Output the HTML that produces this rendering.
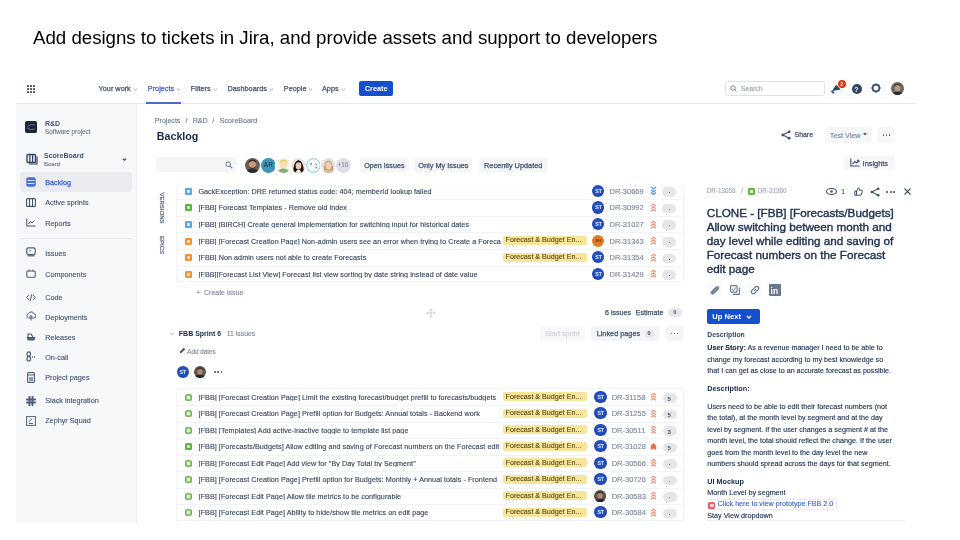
<!DOCTYPE html>
<html><head><meta charset="utf-8"><style>
html,body{margin:0;padding:0;background:#fff;}
body{width:960px;height:540px;overflow:hidden;position:relative;font-family:"Liberation Sans",sans-serif;}
.t{position:absolute;white-space:nowrap;}
.r{position:absolute;}
#j{position:absolute;left:0;top:0;width:960px;height:540px;filter:blur(0.42px);}
</style></head><body>
<div class="t" style="left:33.00px;top:28.84px;font-size:18.67px;line-height:18.67px;color:#000;font-weight:400;filter:blur(0.25px);">Add designs to tickets in Jira, and provide assets and support to developers</div>
<div id="j">
<div class="r" style="left:16px;top:103px;width:900px;height:1px;background:#e6e8ec;"></div>
<div class="r" style="left:16px;top:104px;width:120px;height:419px;background:#f7f8fa;"></div>
<div class="r" style="left:136px;top:104px;width:1px;height:419px;background:#eceef1;"></div>
<svg class="r" style="left:27px;top:84.5px;" width="8" height="8" viewBox="0 0 8 8"><rect x="0" y="0" width="2" height="2" rx="0.6" fill="#42526e"/><rect x="0" y="3" width="2" height="2" rx="0.6" fill="#42526e"/><rect x="0" y="6" width="2" height="2" rx="0.6" fill="#42526e"/><rect x="3" y="0" width="2" height="2" rx="0.6" fill="#42526e"/><rect x="3" y="3" width="2" height="2" rx="0.6" fill="#42526e"/><rect x="3" y="6" width="2" height="2" rx="0.6" fill="#42526e"/><rect x="6" y="0" width="2" height="2" rx="0.6" fill="#42526e"/><rect x="6" y="3" width="2" height="2" rx="0.6" fill="#42526e"/><rect x="6" y="6" width="2" height="2" rx="0.6" fill="#42526e"/></svg>
<div class="t" style="left:98.60px;top:84.82px;font-size:7.3px;line-height:7.3px;color:#42526e;font-weight:400;-webkit-text-stroke:0.25px currentColor;">Your work</div>
<svg class="r" style="left:132.5px;top:87.6px;" width="5" height="3" viewBox="0 0 5 3"><path d="M0.8 0.6 L2.5 2.2 L4.2 0.6" stroke="#8993a4" stroke-width="0.8" fill="none"/></svg>
<div class="t" style="left:147.80px;top:84.82px;font-size:7.3px;line-height:7.3px;color:#3a5fc8;font-weight:400;-webkit-text-stroke:0.25px currentColor;">Projects</div>
<svg class="r" style="left:175.8px;top:87.6px;" width="5" height="3" viewBox="0 0 5 3"><path d="M0.8 0.6 L2.5 2.2 L4.2 0.6" stroke="#8993a4" stroke-width="0.8" fill="none"/></svg>
<div class="r" style="left:146px;top:101.5px;width:35px;height:2px;background:#4c6bc9;"></div>
<div class="t" style="left:190.80px;top:84.82px;font-size:7.3px;line-height:7.3px;color:#42526e;font-weight:400;-webkit-text-stroke:0.25px currentColor;">Filters</div>
<svg class="r" style="left:212.5px;top:87.6px;" width="5" height="3" viewBox="0 0 5 3"><path d="M0.8 0.6 L2.5 2.2 L4.2 0.6" stroke="#8993a4" stroke-width="0.8" fill="none"/></svg>
<div class="t" style="left:227.50px;top:84.82px;font-size:7.3px;line-height:7.3px;color:#42526e;font-weight:400;-webkit-text-stroke:0.25px currentColor;">Dashboards</div>
<svg class="r" style="left:269.2px;top:87.6px;" width="5" height="3" viewBox="0 0 5 3"><path d="M0.8 0.6 L2.5 2.2 L4.2 0.6" stroke="#8993a4" stroke-width="0.8" fill="none"/></svg>
<div class="t" style="left:283.80px;top:84.82px;font-size:7.3px;line-height:7.3px;color:#42526e;font-weight:400;-webkit-text-stroke:0.25px currentColor;">People</div>
<svg class="r" style="left:307.6px;top:87.6px;" width="5" height="3" viewBox="0 0 5 3"><path d="M0.8 0.6 L2.5 2.2 L4.2 0.6" stroke="#8993a4" stroke-width="0.8" fill="none"/></svg>
<div class="t" style="left:322.00px;top:84.82px;font-size:7.3px;line-height:7.3px;color:#42526e;font-weight:400;-webkit-text-stroke:0.25px currentColor;">Apps</div>
<svg class="r" style="left:340.6px;top:87.6px;" width="5" height="3" viewBox="0 0 5 3"><path d="M0.8 0.6 L2.5 2.2 L4.2 0.6" stroke="#8993a4" stroke-width="0.8" fill="none"/></svg>
<div class="r" style="left:359px;top:81px;width:34px;height:15px;background:#1450cc;border-radius:2px"></div>
<div class="t" style="left:364.80px;top:85.02px;font-size:7.3px;line-height:7.3px;color:#fff;font-weight:700;">Create</div>
<div class="r" style="left:725px;top:81px;width:100px;height:15px;background:#fff;border:1px solid #dfe1e6;border-radius:3px;box-sizing:border-box"></div>
<svg class="r" style="left:730px;top:85px;" width="7" height="7" viewBox="0 0 7 7"><circle cx="3" cy="3" r="2.2" stroke="#6b778c" stroke-width="0.9" fill="none"/><path d="M4.6 4.6 L6.5 6.5" stroke="#6b778c" stroke-width="0.9"/></svg>
<div class="t" style="left:741.00px;top:85.64px;font-size:6.8px;line-height:6.8px;color:#97a0af;font-weight:400;-webkit-text-stroke:0.12px currentColor;">Search</div>
<svg class="r" style="left:829px;top:80px;" width="16" height="16" viewBox="0 0 16 16"><path d="M3 11 L7 4.8 L11.8 9.6 Z" fill="#2a4563"/><path d="M3.2 10.2 L5.6 12.6 L4.2 14 L1.8 11.6 Z" fill="#2d6474"/></svg>
<div class="r" style="left:838px;top:80px;width:8px;height:8px;background:#de350b;border-radius:50%"></div>
<div class="t" style="left:840.30px;top:82.47px;font-size:5px;line-height:5px;color:#fff;font-weight:700;">2</div>
<div class="r" style="left:851.5px;top:83.5px;width:10px;height:10px;background:#344563;border-radius:50%"></div>
<div class="t" style="left:854.30px;top:85.67px;font-size:7px;line-height:7px;color:#fff;font-weight:700;">?</div>
<svg class="r" style="left:870px;top:82.2px;" width="12" height="12" viewBox="0 0 12 12"><circle cx="6" cy="6" r="3.3" stroke="#344563" stroke-width="1.5" fill="none"/><rect x="5.2" y="1.4" width="1.6" height="1.8" fill="#344563" transform="rotate(0 6 6)"/><rect x="5.2" y="1.4" width="1.6" height="1.8" fill="#344563" transform="rotate(45 6 6)"/><rect x="5.2" y="1.4" width="1.6" height="1.8" fill="#344563" transform="rotate(90 6 6)"/><rect x="5.2" y="1.4" width="1.6" height="1.8" fill="#344563" transform="rotate(135 6 6)"/><rect x="5.2" y="1.4" width="1.6" height="1.8" fill="#344563" transform="rotate(180 6 6)"/><rect x="5.2" y="1.4" width="1.6" height="1.8" fill="#344563" transform="rotate(225 6 6)"/><rect x="5.2" y="1.4" width="1.6" height="1.8" fill="#344563" transform="rotate(270 6 6)"/><rect x="5.2" y="1.4" width="1.6" height="1.8" fill="#344563" transform="rotate(315 6 6)"/></svg>
<svg class="r" style="left:891.0px;top:81.7px;overflow:visible;" width="13" height="13" viewBox="0 0 13 13"><defs><clipPath id="c8975_882"><circle cx="6.5" cy="6.5" r="6.5"/></clipPath></defs><g clip-path="url(#c8975_882)"><rect width="13" height="13" fill="#6f6659"/><ellipse cx="6.5" cy="6" rx="3" ry="3.6" fill="#b79b7f"/><path d="M3.3 5 Q6.5 1 9.7 5 L9.6 3 Q6.5 0 3.4 3Z" fill="#4a3f33"/><path d="M0 13 Q2 9.5 6.5 9.8 Q11 9.5 13 13Z" fill="#232a36"/></g></svg>
<div class="r" style="left:25px;top:121px;width:12px;height:12px;background:#1d2330;border-radius:2px"></div>
<svg class="r" style="left:25px;top:121px;" width="12" height="12" viewBox="0 0 12 12"><path d="M2 6 Q6 2 10 4 M2 7 Q6 10 10 8" stroke="#6d87b8" stroke-width="0.8" fill="none"/></svg>
<div class="t" style="left:45.00px;top:119.67px;font-size:7px;line-height:7px;color:#42526e;font-weight:700;">R&amp;D</div>
<div class="t" style="left:45.00px;top:129.07px;font-size:6.3px;line-height:6.3px;color:#6b778c;font-weight:400;-webkit-text-stroke:0.12px currentColor;">Software project</div>
<svg class="r" style="left:26px;top:153px;" width="12" height="12" viewBox="0 0 12 12"><rect x="1" y="1.5" width="8.5" height="8" rx="1" stroke="#344563" stroke-width="1.4" fill="none"/><path d="M3.9 1.5 V9.5 M6.6 1.5 V9.5" stroke="#344563" stroke-width="1.3"/><path d="M11 3.5 V11 H3" stroke="#344563" stroke-width="1.2" fill="none"/></svg>
<div class="t" style="left:44.00px;top:151.77px;font-size:7.0px;line-height:7.0px;color:#42526e;font-weight:700;">ScoreBoard</div>
<div class="t" style="left:44.00px;top:161.32px;font-size:6px;line-height:6px;color:#6b778c;font-weight:400;-webkit-text-stroke:0.12px currentColor;">Board</div>
<svg class="r" style="left:122px;top:158px;" width="5" height="3" viewBox="0 0 5 3"><path d="M0.8 0.6 L2.5 2.2 L4.2 0.6" stroke="#42526e" stroke-width="1.3" fill="none"/></svg>
<div class="r" style="left:20px;top:172px;width:112px;height:20px;background:#ebecf0;border-radius:3px"></div>
<svg class="r" style="left:26px;top:177px;" width="10" height="10" viewBox="0 0 10 10"><rect x="0.3" y="0.3" width="9.4" height="9.4" rx="1.8" fill="#4a6fd6"/><path d="M1.5 3.5 H8.5 M1.5 6.5 H8.5" stroke="#dbe4fb" stroke-width="1"/></svg>
<div class="t" style="left:45.20px;top:178.76px;font-size:7.25px;line-height:7.25px;color:#3a5fc8;font-weight:400;-webkit-text-stroke:0.25px currentColor;">Backlog</div>
<svg class="r" style="left:26px;top:198px;" width="10" height="9" viewBox="0 0 10 9"><rect x="0.6" y="0.6" width="8.8" height="7.8" rx="1" stroke="#42526e" stroke-width="1.1" fill="none"/><path d="M3.5 0.6 V8.4 M6.5 0.6 V8.4" stroke="#42526e" stroke-width="1"/></svg>
<div class="t" style="left:45.20px;top:198.82px;font-size:7.3px;line-height:7.3px;color:#44536d;font-weight:400;-webkit-text-stroke:0.12px currentColor;">Active sprints</div>
<svg class="r" style="left:26px;top:218px;" width="10" height="9" viewBox="0 0 10 9"><path d="M0.8 0.5 V8 H9.5" stroke="#42526e" stroke-width="1" fill="none"/><path d="M2.5 6 L4.5 3.5 L6 5 L8.5 2.5" stroke="#42526e" stroke-width="1" fill="none"/></svg>
<div class="t" style="left:45.20px;top:219.62px;font-size:7.3px;line-height:7.3px;color:#44536d;font-weight:400;-webkit-text-stroke:0.12px currentColor;">Reports</div>
<div class="r" style="left:20px;top:237.5px;width:112px;height:1px;background:#e4e6ea;"></div>
<div class="t" style="left:45.20px;top:249.56px;font-size:7.25px;line-height:7.25px;color:#44536d;font-weight:400;-webkit-text-stroke:0.12px currentColor;">Issues</div>
<div class="t" style="left:45.20px;top:270.96px;font-size:7.25px;line-height:7.25px;color:#44536d;font-weight:400;-webkit-text-stroke:0.12px currentColor;">Components</div>
<div class="t" style="left:45.20px;top:293.96px;font-size:7.25px;line-height:7.25px;color:#44536d;font-weight:400;-webkit-text-stroke:0.12px currentColor;">Code</div>
<div class="t" style="left:45.20px;top:313.96px;font-size:7.25px;line-height:7.25px;color:#44536d;font-weight:400;-webkit-text-stroke:0.12px currentColor;">Deployments</div>
<div class="t" style="left:45.20px;top:333.96px;font-size:7.25px;line-height:7.25px;color:#44536d;font-weight:400;-webkit-text-stroke:0.12px currentColor;">Releases</div>
<div class="t" style="left:45.20px;top:353.96px;font-size:7.25px;line-height:7.25px;color:#44536d;font-weight:400;-webkit-text-stroke:0.12px currentColor;">On-call</div>
<div class="t" style="left:45.20px;top:373.96px;font-size:7.25px;line-height:7.25px;color:#44536d;font-weight:400;-webkit-text-stroke:0.12px currentColor;">Project pages</div>
<div class="t" style="left:45.20px;top:396.76px;font-size:7.25px;line-height:7.25px;color:#44536d;font-weight:400;-webkit-text-stroke:0.12px currentColor;">Slack integration</div>
<div class="t" style="left:45.20px;top:416.76px;font-size:7.25px;line-height:7.25px;color:#44536d;font-weight:400;-webkit-text-stroke:0.12px currentColor;">Zephyr Squad</div>
<svg class="r" style="left:26px;top:247px;" width="10" height="10" viewBox="0 0 10 10"><rect x="0.8" y="0.8" width="8.4" height="6.8" rx="1.5" stroke="#505f79" stroke-width="1.2" fill="none"/><path d="M1.5 8.8 H8.5" stroke="#505f79" stroke-width="1.2"/><path d="M3.5 4.5 L5 2.8" stroke="#505f79" stroke-width="0.9"/></svg>
<svg class="r" style="left:26px;top:269px;" width="10" height="9" viewBox="0 0 10 9"><rect x="0.8" y="2" width="8.4" height="6.2" rx="1" stroke="#505f79" stroke-width="1.1" fill="none"/><path d="M3 0.5 V2.5 M7 0.5 V2.5" stroke="#505f79" stroke-width="1"/></svg>
<svg class="r" style="left:26px;top:292.6px;" width="10" height="9" viewBox="0 0 10 9"><path d="M2.8 2 L0.8 4.5 L2.8 7 M7.2 2 L9.2 4.5 L7.2 7 M6 0.8 L4 8.2" stroke="#505f79" stroke-width="1" fill="none"/></svg>
<svg class="r" style="left:26px;top:311px;" width="10" height="10" viewBox="0 0 10 10"><path d="M2.5 7 A2.2 2.2 0 0 1 2.5 2.8 A2.8 2.8 0 0 1 7.8 2.8 A2.1 2.1 0 0 1 7.8 7 Z" stroke="#505f79" stroke-width="1" fill="none"/><path d="M5 9.5 V4.5 M3.6 5.8 L5 4.4 L6.4 5.8" stroke="#505f79" stroke-width="1" fill="none"/></svg>
<svg class="r" style="left:26px;top:332px;" width="10" height="9" viewBox="0 0 10 9"><path d="M0.5 5 H9.5 L8.3 8.5 H1.7 Z" fill="#505f79"/><path d="M2 5 V2 H5 L7 5" stroke="#505f79" stroke-width="1.2" fill="none"/></svg>
<svg class="r" style="left:26px;top:351.3px;" width="10" height="11" viewBox="0 0 10 11"><ellipse cx="2.8" cy="3" rx="1.8" ry="2.2" stroke="#505f79" stroke-width="1.2" fill="none"/><ellipse cx="2.8" cy="7.8" rx="1.8" ry="2.4" stroke="#505f79" stroke-width="1.2" fill="none"/><circle cx="6.5" cy="6" r="0.7" fill="#505f79"/><circle cx="8.6" cy="6" r="0.7" fill="#505f79"/></svg>
<svg class="r" style="left:27px;top:372.2px;" width="8" height="11" viewBox="0 0 8 11"><rect x="0.6" y="0.6" width="6.8" height="9.8" rx="1" stroke="#505f79" stroke-width="1.1" fill="none"/><path d="M0.6 3 H7.4" stroke="#505f79" stroke-width="1"/><rect x="2" y="5" width="4" height="4" fill="#505f79" opacity="0.6"/></svg>
<svg class="r" style="left:26px;top:395.5px;" width="10" height="10" viewBox="0 0 10 10"><path d="M3.5 0.8 V9.2 M6.5 0.8 V9.2 M0.8 3.5 H9.2 M0.8 6.5 H9.2" stroke="#505f79" stroke-width="1.9" stroke-linecap="round"/></svg>
<svg class="r" style="left:26px;top:415.6px;" width="10" height="10" viewBox="0 0 10 10"><rect x="0.6" y="0.6" width="8.8" height="8.8" stroke="#505f79" stroke-width="1" fill="none"/><path d="M2.5 6 L6 2.8 M3 7.5 H7" stroke="#505f79" stroke-width="1" fill="none"/></svg>
<div class="t" style="left:154.80px;top:117.69px;font-size:7.1px;line-height:7.1px;color:#6b778c;font-weight:400;-webkit-text-stroke:0.12px currentColor;">Projects</div>
<div class="t" style="left:185.50px;top:117.69px;font-size:7.1px;line-height:7.1px;color:#6b778c;font-weight:400;-webkit-text-stroke:0.12px currentColor;">/</div>
<div class="t" style="left:192.70px;top:117.69px;font-size:7.1px;line-height:7.1px;color:#6b778c;font-weight:400;-webkit-text-stroke:0.12px currentColor;">R&amp;D</div>
<div class="t" style="left:212.30px;top:117.69px;font-size:7.1px;line-height:7.1px;color:#6b778c;font-weight:400;-webkit-text-stroke:0.12px currentColor;">/</div>
<div class="t" style="left:219.80px;top:117.69px;font-size:7.1px;line-height:7.1px;color:#6b778c;font-weight:400;-webkit-text-stroke:0.12px currentColor;">ScoreBoard</div>
<div class="t" style="left:156.80px;top:131.14px;font-size:10.7px;line-height:10.7px;color:#172b4d;font-weight:700;">Backlog</div>
<svg class="r" style="left:781px;top:130px;" width="10" height="10" viewBox="0 0 10 10"><circle cx="8.2" cy="1.8" r="1.4" fill="#42526e"/><circle cx="1.8" cy="5" r="1.4" fill="#42526e"/><circle cx="8.2" cy="8.2" r="1.4" fill="#42526e"/><path d="M8.2 1.8 L1.8 5 L8.2 8.2" stroke="#42526e" stroke-width="1.1" fill="none"/></svg>
<div class="t" style="left:794.50px;top:131.72px;font-size:6.95px;line-height:6.95px;color:#42526e;font-weight:400;-webkit-text-stroke:0.25px currentColor;">Share</div>
<div class="r" style="left:824.7px;top:127.3px;width:47px;height:15.3px;background:#f6f7f8;border-radius:3px"></div>
<div class="t" style="left:829.80px;top:131.50px;font-size:7.2px;line-height:7.2px;color:#7a869a;font-weight:400;-webkit-text-stroke:0.12px currentColor;">Test View</div>
<svg class="r" style="left:863px;top:133px;" width="4" height="3" viewBox="0 0 4 3"><path d="M0 0 H4 L2 2.5Z" fill="#42526e"/></svg>
<div class="r" style="left:878px;top:127.3px;width:17.4px;height:15.3px;background:#f6f7f8;border-radius:3px"></div>
<div class="r" style="left:882.5px;top:134.2px;width:1.6px;height:1.6px;background:#42526e;border-radius:50%"></div>
<div class="r" style="left:885.5px;top:134.2px;width:1.6px;height:1.6px;background:#42526e;border-radius:50%"></div>
<div class="r" style="left:888.5px;top:134.2px;width:1.6px;height:1.6px;background:#42526e;border-radius:50%"></div>
<div class="r" style="left:843.6px;top:155.7px;width:51.8px;height:14.6px;background:#f6f7f8;border-radius:3px"></div>
<svg class="r" style="left:850px;top:158px;" width="10" height="9" viewBox="0 0 10 9"><path d="M0.8 0.5 V8 H9.5" stroke="#42526e" stroke-width="1.1" fill="none"/><path d="M2.5 6 L5 3.5 L6.5 5 L9 2.5" stroke="#42526e" stroke-width="1.1" fill="none"/><path d="M6.8 2.3 H9 V4.5" stroke="#42526e" stroke-width="1" fill="none"/></svg>
<div class="t" style="left:862.60px;top:160.43px;font-size:7.4px;line-height:7.4px;color:#42526e;font-weight:400;-webkit-text-stroke:0.25px currentColor;">Insights</div>
<div class="r" style="left:156px;top:157.2px;width:80.4px;height:14.7px;background:#f4f5f7;border-radius:3px"></div>
<svg class="r" style="left:225px;top:161px;" width="8" height="8" viewBox="0 0 8 8"><circle cx="3.2" cy="3.2" r="2.3" stroke="#6b778c" stroke-width="1" fill="none"/><path d="M4.9 4.9 L7.2 7.2" stroke="#6b778c" stroke-width="1.1"/></svg>
<svg class="r" style="left:245.3px;top:157.5px;overflow:visible;border-radius:50%;box-shadow:0 0 0 1.2px #fff;" width="15" height="15" viewBox="0 0 15 15"><defs><clipPath id="c2528_1650"><circle cx="7.5" cy="7.5" r="7.5"/></clipPath></defs><g clip-path="url(#c2528_1650)"><rect width="15" height="15" fill="#6a5f55"/><ellipse cx="7.5" cy="6.5" rx="3.6" ry="4.2" fill="#c49a7a"/><path d="M3.8 5 Q7.5 0.8 11.2 5 L11 3 Q7.5 -0.5 4 3Z" fill="#3b2e25"/><path d="M4.3 8 Q7.5 12 10.7 8 L10.5 10 Q7.5 12.5 4.5 10Z" fill="#4a3a2e"/><path d="M0 15 Q2 10.5 7.5 11 Q13 10.5 15 15Z" fill="#1e2a38"/></g></svg>
<svg class="r" style="left:260.7px;top:157.5px;overflow:visible;border-radius:50%;box-shadow:0 0 0 1.2px #fff;" width="15" height="15" viewBox="0 0 15 15"><defs><clipPath id="c2682_1650"><circle cx="7.5" cy="7.5" r="7.5"/></clipPath></defs><g clip-path="url(#c2682_1650)"><rect width="15" height="15" fill="#3f95b5"/></g></svg>
<svg class="r" style="left:275.5px;top:157.5px;overflow:visible;border-radius:50%;box-shadow:0 0 0 1.2px #fff;" width="15" height="15" viewBox="0 0 15 15"><defs><clipPath id="c2830_1650"><circle cx="7.5" cy="7.5" r="7.5"/></clipPath></defs><g clip-path="url(#c2830_1650)"><rect width="15" height="15" fill="#f5f3e6"/><ellipse cx="7.5" cy="6.8" rx="3.6" ry="3.8" fill="#f6dfb8"/><path d="M3.5 6 Q3.5 1.2 7.5 1.5 Q11.5 1.2 11.5 6 Q10 3.5 7.5 3.8 Q5 3.5 3.5 6Z" fill="#eed36a"/><path d="M1 15 Q2.5 10.5 7.5 10.5 Q12.5 10.5 14 15Z" fill="#7fb07a"/></g></svg>
<svg class="r" style="left:290.9px;top:157.5px;overflow:visible;border-radius:50%;box-shadow:0 0 0 1.2px #fff;" width="15" height="15" viewBox="0 0 15 15"><defs><clipPath id="c2984_1650"><circle cx="7.5" cy="7.5" r="7.5"/></clipPath></defs><g clip-path="url(#c2984_1650)"><rect width="15" height="15" fill="#e9e4df"/><path d="M2.5 15 Q1.5 4 7.5 2 Q13.5 4 12.5 15Z" fill="#161412"/><ellipse cx="7.5" cy="7.8" rx="2.9" ry="3.6" fill="#e8c8b0"/><path d="M4.5 15 Q5 12 7.5 11.8 Q10 12 10.5 15Z" fill="#f2efe9"/></g></svg>
<svg class="r" style="left:306.2px;top:157.5px;overflow:visible;border-radius:50%;box-shadow:0 0 0 1.2px #fff;" width="15" height="15" viewBox="0 0 15 15"><defs><clipPath id="c3137_1650"><circle cx="7.5" cy="7.5" r="7.5"/></clipPath></defs><g clip-path="url(#c3137_1650)"><rect width="15" height="15" fill="#f7fcfc"/><circle cx="7.5" cy="7.5" r="6.9" fill="none" stroke="#6cc0c0" stroke-width="1"/><path d="M4.2 6.2 L6 5.6 M9.4 5.8 L10.8 7.2 M10 8.8 L10.4 10.4" stroke="#334" stroke-width="0.9"/></g></svg>
<svg class="r" style="left:320.8px;top:157.5px;overflow:visible;border-radius:50%;box-shadow:0 0 0 1.2px #fff;" width="15" height="15" viewBox="0 0 15 15"><defs><clipPath id="c3283_1650"><circle cx="7.5" cy="7.5" r="7.5"/></clipPath></defs><g clip-path="url(#c3283_1650)"><rect width="15" height="15" fill="#e6e1da"/><path d="M3 13 Q2.5 3 7.5 2.5 Q12.5 3 12 13Z" fill="#c9a074"/><ellipse cx="7.5" cy="7.6" rx="3" ry="3.7" fill="#efcfb6"/><path d="M1.5 15 Q3 11.5 7.5 11.5 Q12 11.5 13.5 15Z" fill="#d9b89a"/></g></svg>
<svg class="r" style="left:336.2px;top:157.5px;overflow:visible;border-radius:50%;box-shadow:0 0 0 1.2px #fff;" width="15" height="15" viewBox="0 0 15 15"><defs><clipPath id="c3437_1650"><circle cx="7.5" cy="7.5" r="7.5"/></clipPath></defs><g clip-path="url(#c3437_1650)"><rect width="15" height="15" fill="#dfe1e6"/></g></svg>
<div class="t" style="left:263.50px;top:162.20px;font-size:6.5px;line-height:6.5px;color:#1d4f6a;font-weight:700;">AR</div>
<div class="t" style="left:337.60px;top:162.37px;font-size:6.3px;line-height:6.3px;color:#8993a4;font-weight:400;-webkit-text-stroke:0.12px currentColor;">+16</div>
<div class="r" style="left:359.8px;top:157.7px;width:49.7px;height:14.8px;background:#f4f5f7;border-radius:3px"></div>
<div class="r" style="left:413.9px;top:157.7px;width:58.6px;height:14.8px;background:#f4f5f7;border-radius:3px"></div>
<div class="r" style="left:478.7px;top:157.7px;width:68.3px;height:14.8px;background:#f4f5f7;border-radius:3px"></div>
<div class="t" style="left:364.20px;top:161.90px;font-size:7.2px;line-height:7.2px;color:#42526e;font-weight:400;-webkit-text-stroke:0.25px currentColor;">Open Issues</div>
<div class="t" style="left:418.30px;top:161.78px;font-size:7.35px;line-height:7.35px;color:#42526e;font-weight:400;-webkit-text-stroke:0.25px currentColor;">Only My Issues</div>
<div class="t" style="left:484.00px;top:161.78px;font-size:7.35px;line-height:7.35px;color:#42526e;font-weight:400;-webkit-text-stroke:0.25px currentColor;">Recently Updated</div>
<div class="t" style="left:161.8px;top:207.6px;font-size:6px;line-height:6px;color:#5e6c84;-webkit-text-stroke:0.25px currentColor;transform:translate(-50%,-50%) rotate(90deg);">VERSIONS</div>
<div class="t" style="left:161.8px;top:245.4px;font-size:6px;line-height:6px;color:#5e6c84;-webkit-text-stroke:0.25px currentColor;transform:translate(-50%,-50%) rotate(90deg);">EPICS</div>
<div class="r" style="left:176px;top:184.5px;width:507.5px;height:97.5px;background:#fff;border:1px solid #f3f4f7;border-top-color:#f9fafb;box-sizing:border-box"></div>
<svg class="r" style="left:185.3px;top:187.70000000000002px;" width="7" height="7" viewBox="0 0 7 7"><rect x="0" y="0" width="7" height="7" rx="1.2" fill="#5aa6ea"/><rect x="2.1" y="2.1" width="2.8" height="2.8" rx="0.6" fill="#e3f1fd"/></svg>
<div class="t" style="left:198.4px;top:187.72px;-webkit-text-stroke:0.12px currentColor;font-size:7.2px;line-height:7.3px;letter-spacing:0.05px;color:#36445c;max-width:303px;overflow:hidden">GackException: DRE returned status code: 404; memberId lookup failed</div>
<div class="r" style="left:592.3px;top:184.8px;width:12.2px;height:12.2px;background:radial-gradient(circle at 50% 45%, #2f5fd0 0%, #1f48b8 60%, #183a9a 100%);border-radius:50%"></div>
<div class="t" style="left:595.30px;top:188.80px;font-size:5.2px;line-height:5.2px;color:#dfe6f7;font-weight:700;">ST</div>
<div class="t" style="left:609.50px;top:187.75px;font-size:7.5px;line-height:7.5px;color:#7a869a;font-weight:400;-webkit-text-stroke:0.12px currentColor;">DR-30669</div>
<svg class="r" style="left:650.2px;top:186.4px;" width="7" height="9" viewBox="0 0 7 9"><path d="M1 1 L3.5 2.8 L6 1 M1 4 L3.5 5.8 L6 4 M1 6.6 L3.5 8.4 L6 6.6" stroke="#5b9cf2" stroke-width="1.4" fill="none"/></svg>
<div class="r" style="left:662.3px;top:187.2px;width:14px;height:9.6px;background:#e4e6ea;border-radius:4.8px"></div>
<div class="r" style="left:668.5px;top:192.2px;width:1.8px;height:0.9px;background:#6b778c;"></div>
<div class="r" style="left:177px;top:199.2px;width:506px;height:1px;background:#f2f3f6;"></div>
<svg class="r" style="left:185.3px;top:204.3px;" width="7" height="7" viewBox="0 0 7 7"><rect x="0" y="0" width="7" height="7" rx="1.2" fill="#5fb544"/><rect x="2.1" y="2.1" width="2.8" height="2.8" rx="0.6" fill="#d4f0c2"/></svg>
<div class="t" style="left:198.4px;top:204.32px;-webkit-text-stroke:0.12px currentColor;font-size:7.2px;line-height:7.3px;letter-spacing:0.05px;color:#36445c;max-width:303px;overflow:hidden">[FBB] Forecast Templates - Remove old index</div>
<div class="r" style="left:592.3px;top:201.4px;width:12.2px;height:12.2px;background:radial-gradient(circle at 50% 45%, #2f5fd0 0%, #1f48b8 60%, #183a9a 100%);border-radius:50%"></div>
<div class="t" style="left:595.30px;top:205.40px;font-size:5.2px;line-height:5.2px;color:#dfe6f7;font-weight:700;">ST</div>
<div class="t" style="left:609.50px;top:204.35px;font-size:7.5px;line-height:7.5px;color:#7a869a;font-weight:400;-webkit-text-stroke:0.12px currentColor;">DR-30992</div>
<svg class="r" style="left:650.2px;top:203.0px;" width="7" height="9" viewBox="0 0 7 9"><path d="M1 3 L3.5 1.2 L6 3 M1 5.6 L3.5 3.8 L6 5.6 M1 8.2 L3.5 6.4 L6 8.2" stroke="#f59a80" stroke-width="1.3" fill="none"/></svg>
<div class="r" style="left:662.3px;top:203.79999999999998px;width:14px;height:9.6px;background:#e4e6ea;border-radius:4.8px"></div>
<div class="r" style="left:668.5px;top:208.79999999999998px;width:1.8px;height:0.9px;background:#6b778c;"></div>
<div class="r" style="left:177px;top:215.8px;width:506px;height:1px;background:#f2f3f6;"></div>
<svg class="r" style="left:185.3px;top:220.90000000000003px;" width="7" height="7" viewBox="0 0 7 7"><rect x="0" y="0" width="7" height="7" rx="1.2" fill="#5aa6ea"/><rect x="2.1" y="2.1" width="2.8" height="2.8" rx="0.6" fill="#e3f1fd"/></svg>
<div class="t" style="left:198.4px;top:220.92px;-webkit-text-stroke:0.12px currentColor;font-size:7.2px;line-height:7.3px;letter-spacing:0.05px;color:#36445c;max-width:303px;overflow:hidden">[FBB] [BIRCH] Create general implementation for switching input for historical dates</div>
<div class="r" style="left:592.3px;top:218.00000000000003px;width:12.2px;height:12.2px;background:radial-gradient(circle at 50% 45%, #2f5fd0 0%, #1f48b8 60%, #183a9a 100%);border-radius:50%"></div>
<div class="t" style="left:595.30px;top:222.00px;font-size:5.2px;line-height:5.2px;color:#dfe6f7;font-weight:700;">ST</div>
<div class="t" style="left:609.50px;top:220.95px;font-size:7.5px;line-height:7.5px;color:#7a869a;font-weight:400;-webkit-text-stroke:0.12px currentColor;">DR-31027</div>
<svg class="r" style="left:650.2px;top:219.60000000000002px;" width="7" height="9" viewBox="0 0 7 9"><path d="M1 3 L3.5 1.2 L6 3 M1 5.6 L3.5 3.8 L6 5.6 M1 8.2 L3.5 6.4 L6 8.2" stroke="#f59a80" stroke-width="1.3" fill="none"/></svg>
<div class="r" style="left:662.3px;top:220.4px;width:14px;height:9.6px;background:#e4e6ea;border-radius:4.8px"></div>
<div class="r" style="left:668.5px;top:225.4px;width:1.8px;height:0.9px;background:#6b778c;"></div>
<div class="r" style="left:177px;top:232.4px;width:506px;height:1px;background:#f2f3f6;"></div>
<svg class="r" style="left:185.3px;top:237.50000000000003px;" width="7" height="7" viewBox="0 0 7 7"><rect x="0" y="0" width="7" height="7" rx="1.2" fill="#f79232"/><rect x="2.1" y="2.1" width="2.8" height="2.8" rx="0.6" fill="#fde0c2"/></svg>
<div class="t" style="left:198.4px;top:237.52px;-webkit-text-stroke:0.12px currentColor;font-size:7.2px;line-height:7.3px;letter-spacing:0.05px;color:#36445c;max-width:303px;overflow:hidden">[FBB] [Forecast Creation Page] Non-admin users see an error when trying to Create a Foreca</div>
<div class="r" style="left:502.6px;top:236.20000000000002px;width:84px;height:9px;background:#f8e59c;border-radius:2px"></div>
<div class="t" style="left:505.60px;top:237.45px;font-size:7.15px;line-height:7.15px;color:#5a4a14;font-weight:400;-webkit-text-stroke:0.12px currentColor;">Forecast &amp; Budget En...</div>
<div class="r" style="left:592.3px;top:234.60000000000002px;width:12.2px;height:12.2px;background:#e07b23;border-radius:50%"></div>
<div class="t" style="left:595.50px;top:239.06px;font-size:4.3px;line-height:4.3px;color:#7a3a00;font-weight:700;">EH</div>
<div class="t" style="left:609.50px;top:237.55px;font-size:7.5px;line-height:7.5px;color:#7a869a;font-weight:400;-webkit-text-stroke:0.12px currentColor;">DR-31343</div>
<svg class="r" style="left:650.2px;top:236.20000000000002px;" width="7" height="9" viewBox="0 0 7 9"><path d="M1 3 L3.5 1.2 L6 3 M1 5.6 L3.5 3.8 L6 5.6 M1 8.2 L3.5 6.4 L6 8.2" stroke="#f59a80" stroke-width="1.3" fill="none"/></svg>
<div class="r" style="left:662.3px;top:237.0px;width:14px;height:9.6px;background:#e4e6ea;border-radius:4.8px"></div>
<div class="r" style="left:668.5px;top:242.0px;width:1.8px;height:0.9px;background:#6b778c;"></div>
<div class="r" style="left:177px;top:249.0px;width:506px;height:1px;background:#f2f3f6;"></div>
<svg class="r" style="left:185.3px;top:254.10000000000002px;" width="7" height="7" viewBox="0 0 7 7"><rect x="0" y="0" width="7" height="7" rx="1.2" fill="#f79232"/><rect x="2.1" y="2.1" width="2.8" height="2.8" rx="0.6" fill="#fde0c2"/></svg>
<div class="t" style="left:198.4px;top:254.12px;-webkit-text-stroke:0.12px currentColor;font-size:7.2px;line-height:7.3px;letter-spacing:0.05px;color:#36445c;max-width:303px;overflow:hidden">[FBB] Non admin users not able to create Forecasts</div>
<div class="r" style="left:502.6px;top:252.8px;width:84px;height:9px;background:#f8e59c;border-radius:2px"></div>
<div class="t" style="left:505.60px;top:254.05px;font-size:7.15px;line-height:7.15px;color:#5a4a14;font-weight:400;-webkit-text-stroke:0.12px currentColor;">Forecast &amp; Budget En...</div>
<div class="r" style="left:592.3px;top:251.20000000000002px;width:12.2px;height:12.2px;background:radial-gradient(circle at 50% 45%, #2f5fd0 0%, #1f48b8 60%, #183a9a 100%);border-radius:50%"></div>
<div class="t" style="left:595.30px;top:255.20px;font-size:5.2px;line-height:5.2px;color:#dfe6f7;font-weight:700;">ST</div>
<div class="t" style="left:609.50px;top:254.15px;font-size:7.5px;line-height:7.5px;color:#7a869a;font-weight:400;-webkit-text-stroke:0.12px currentColor;">DR-31354</div>
<svg class="r" style="left:650.2px;top:252.8px;" width="7" height="9" viewBox="0 0 7 9"><path d="M1 3 L3.5 1.2 L6 3 M1 5.6 L3.5 3.8 L6 5.6 M1 8.2 L3.5 6.4 L6 8.2" stroke="#f59a80" stroke-width="1.3" fill="none"/></svg>
<div class="r" style="left:662.3px;top:253.60000000000002px;width:14px;height:9.6px;background:#e4e6ea;border-radius:4.8px"></div>
<div class="r" style="left:668.5px;top:258.6px;width:1.8px;height:0.9px;background:#6b778c;"></div>
<div class="r" style="left:177px;top:265.6px;width:506px;height:1px;background:#f2f3f6;"></div>
<svg class="r" style="left:185.3px;top:270.7px;" width="7" height="7" viewBox="0 0 7 7"><rect x="0" y="0" width="7" height="7" rx="1.2" fill="#f79232"/><rect x="2.1" y="2.1" width="2.8" height="2.8" rx="0.6" fill="#fde0c2"/></svg>
<div class="t" style="left:198.4px;top:270.72px;-webkit-text-stroke:0.12px currentColor;font-size:7.2px;line-height:7.3px;letter-spacing:0.05px;color:#36445c;max-width:303px;overflow:hidden">[FBB][Forecast List View] Forecast list view sorting by date string instead of date value</div>
<div class="r" style="left:592.3px;top:267.79999999999995px;width:12.2px;height:12.2px;background:radial-gradient(circle at 50% 45%, #2f5fd0 0%, #1f48b8 60%, #183a9a 100%);border-radius:50%"></div>
<div class="t" style="left:595.30px;top:271.80px;font-size:5.2px;line-height:5.2px;color:#dfe6f7;font-weight:700;">ST</div>
<div class="t" style="left:609.50px;top:270.75px;font-size:7.5px;line-height:7.5px;color:#7a869a;font-weight:400;-webkit-text-stroke:0.12px currentColor;">DR-31429</div>
<svg class="r" style="left:650.2px;top:269.4px;" width="7" height="9" viewBox="0 0 7 9"><path d="M1 3 L3.5 1.2 L6 3 M1 5.6 L3.5 3.8 L6 5.6 M1 8.2 L3.5 6.4 L6 8.2" stroke="#f59a80" stroke-width="1.3" fill="none"/></svg>
<div class="r" style="left:662.3px;top:270.2px;width:14px;height:9.6px;background:#e4e6ea;border-radius:4.8px"></div>
<div class="r" style="left:668.5px;top:275.2px;width:1.8px;height:0.9px;background:#6b778c;"></div>
<div class="t" style="left:196.00px;top:289.47px;font-size:7px;line-height:7px;color:#7a869a;font-weight:400;-webkit-text-stroke:0.12px currentColor;">+</div>
<div class="t" style="left:204.00px;top:289.47px;font-size:7px;line-height:7px;color:#7a869a;font-weight:400;-webkit-text-stroke:0.12px currentColor;">Create issue</div>
<svg class="r" style="left:425.5px;top:308px;" width="10" height="10" viewBox="0 0 10 10"><path d="M5 0.8 V9.2 M0.8 5 H9.2" stroke="#c8cdd5" stroke-width="1"/><path d="M3.5 2.2 L5 0.8 L6.5 2.2 M3.5 7.8 L5 9.2 L6.5 7.8 M2.2 3.5 L0.8 5 L2.2 6.5 M7.8 3.5 L9.2 5 L7.8 6.5" stroke="#c8cdd5" stroke-width="0.9" fill="none"/></svg>
<div class="t" style="left:605.00px;top:309.79px;font-size:7.1px;line-height:7.1px;color:#42526e;font-weight:400;-webkit-text-stroke:0.25px currentColor;">6 issues</div>
<div class="t" style="left:635.80px;top:309.79px;font-size:7.1px;line-height:7.1px;color:#42526e;font-weight:400;-webkit-text-stroke:0.25px currentColor;">Estimate</div>
<div class="r" style="left:668.3px;top:308.3px;width:13.4px;height:8.4px;background:#e6e8ec;border-radius:4.2px"></div>
<div class="t" style="left:673.30px;top:310.16px;font-size:5.6px;line-height:5.6px;color:#42526e;font-weight:700;">0</div>
<svg class="r" style="left:169.8px;top:332.2px;" width="4" height="3" viewBox="0 0 4 3"><path d="M0.3 1.2 L2 2.4 L3.7 1.2" stroke="#97a0af" stroke-width="0.9" fill="none"/></svg>
<div class="t" style="left:178.80px;top:330.07px;font-size:7px;line-height:7px;color:#172b4d;font-weight:700;">FBB Sprint 6</div>
<div class="t" style="left:226.70px;top:331.16px;font-size:6.9px;line-height:6.9px;color:#7a869a;font-weight:400;-webkit-text-stroke:0.12px currentColor;">11 issues</div>
<div class="r" style="left:540px;top:325.8px;width:45px;height:15px;background:#f7f8f9;border-radius:3px"></div>
<div class="t" style="left:545.00px;top:330.10px;font-size:7.2px;line-height:7.2px;color:#d4d8de;font-weight:400;-webkit-text-stroke:0.25px currentColor;">Start sprint</div>
<div class="r" style="left:590.8px;top:325.8px;width:68.4px;height:15px;background:#f4f5f7;border-radius:3px"></div>
<div class="t" style="left:596.70px;top:330.02px;font-size:7.3px;line-height:7.3px;color:#42526e;font-weight:400;-webkit-text-stroke:0.25px currentColor;">Linked pages</div>
<div class="r" style="left:644.5px;top:329.5px;width:9px;height:8px;background:#e6e8ec;border-radius:4px"></div>
<div class="t" style="left:647.40px;top:331.26px;font-size:5.6px;line-height:5.6px;color:#42526e;font-weight:700;">0</div>
<div class="r" style="left:665.8px;top:325.8px;width:17.5px;height:15px;background:#f4f5f7;border-radius:3px"></div>
<div class="r" style="left:670.5px;top:332.5px;width:1.6px;height:1.6px;background:#42526e;border-radius:50%"></div>
<div class="r" style="left:673.5px;top:332.5px;width:1.6px;height:1.6px;background:#42526e;border-radius:50%"></div>
<div class="r" style="left:676.5px;top:332.5px;width:1.6px;height:1.6px;background:#42526e;border-radius:50%"></div>
<svg class="r" style="left:178.5px;top:347px;" width="7" height="7" viewBox="0 0 7 7"><path d="M0.8 6.2 L1.3 4.3 L4.8 0.8 L6.2 2.2 L2.7 5.7 Z" fill="#42526e"/></svg>
<div class="t" style="left:187.20px;top:349.07px;font-size:6.3px;line-height:6.3px;color:#7a869a;font-weight:400;-webkit-text-stroke:0.12px currentColor;">Add dates</div>
<div class="r" style="left:176.6px;top:366.09999999999997px;width:12.2px;height:12.2px;background:radial-gradient(circle at 50% 45%, #2f5fd0 0%, #1f48b8 60%, #183a9a 100%);border-radius:50%"></div>
<div class="t" style="left:179.60px;top:370.10px;font-size:5.2px;line-height:5.2px;color:#dfe6f7;font-weight:700;">ST</div>
<svg class="r" style="left:193.5px;top:366.2px;overflow:visible;" width="12" height="12" viewBox="0 0 12 12"><defs><clipPath id="c1995_3722"><circle cx="6.0" cy="6.0" r="6.0"/></clipPath></defs><g clip-path="url(#c1995_3722)"><rect width="12" height="12" fill="#5d5348"/><ellipse cx="6" cy="5.4" rx="2.8" ry="3.3" fill="#a88b6e"/><path d="M3 4.5 Q6 1 9 4.5 L9 2.6 Q6 0 3.1 2.6Z" fill="#3a3028"/><path d="M0 12 Q1.5 8.6 6 8.8 Q10.5 8.6 12 12Z" fill="#1f2630"/></g></svg>
<div class="r" style="left:214.2px;top:371.4px;width:1.8px;height:1.8px;background:#42526e;border-radius:50%"></div>
<div class="r" style="left:217.39999999999998px;top:371.4px;width:1.8px;height:1.8px;background:#42526e;border-radius:50%"></div>
<div class="r" style="left:220.6px;top:371.4px;width:1.8px;height:1.8px;background:#42526e;border-radius:50%"></div>
<div class="r" style="left:176px;top:387.5px;width:508px;height:140px;background:#fff;border:1px solid #f3f4f7;box-sizing:border-box"></div>
<svg class="r" style="left:185.3px;top:393.7px;" width="7" height="7" viewBox="0 0 7 7"><rect x="0.85" y="0.85" width="5.3" height="5.3" rx="0.8" fill="#dcf0cf" stroke="#5aa83a" stroke-width="1.4"/></svg>
<div class="t" style="left:198.6px;top:393.72px;-webkit-text-stroke:0.12px currentColor;font-size:7.2px;line-height:7.3px;letter-spacing:0.05px;color:#36445c;max-width:303px;overflow:hidden">[FBB] [Forecast Creation Page] Limit the existing forecast/budget prefill to forecasts/budgets</div>
<div class="r" style="left:502.6px;top:392.4px;width:84px;height:9px;background:#f8e59c;border-radius:2px"></div>
<div class="t" style="left:505.60px;top:393.65px;font-size:7.15px;line-height:7.15px;color:#5a4a14;font-weight:400;-webkit-text-stroke:0.12px currentColor;">Forecast &amp; Budget En...</div>
<div class="r" style="left:594.4px;top:390.79999999999995px;width:12.2px;height:12.2px;background:radial-gradient(circle at 50% 45%, #2f5fd0 0%, #1f48b8 60%, #183a9a 100%);border-radius:50%"></div>
<div class="t" style="left:597.40px;top:394.80px;font-size:5.2px;line-height:5.2px;color:#dfe6f7;font-weight:700;">ST</div>
<div class="t" style="left:611.70px;top:393.75px;font-size:7.5px;line-height:7.5px;color:#7a869a;font-weight:400;-webkit-text-stroke:0.12px currentColor;">DR-31158</div>
<svg class="r" style="left:650.2px;top:392.4px;" width="7" height="9" viewBox="0 0 7 9"><path d="M1 3 L3.5 1.2 L6 3 M1 5.6 L3.5 3.8 L6 5.6 M1 8.2 L3.5 6.4 L6 8.2" stroke="#f59a80" stroke-width="1.3" fill="none"/></svg>
<div class="r" style="left:662.5px;top:393.2px;width:14px;height:9.6px;background:#e4e6ea;border-radius:4.8px"></div>
<div class="t" style="left:667.60px;top:395.52px;font-size:6.0px;line-height:6.0px;color:#42526e;font-weight:700;">5</div>
<div class="r" style="left:177px;top:405.2px;width:506px;height:1px;background:#f2f3f6;"></div>
<svg class="r" style="left:185.3px;top:410.2px;" width="7" height="7" viewBox="0 0 7 7"><rect x="0.85" y="0.85" width="5.3" height="5.3" rx="0.8" fill="#dcf0cf" stroke="#5aa83a" stroke-width="1.4"/></svg>
<div class="t" style="left:198.6px;top:410.22px;-webkit-text-stroke:0.12px currentColor;font-size:7.2px;line-height:7.3px;letter-spacing:0.05px;color:#36445c;max-width:303px;overflow:hidden">[FBB] [Forecast Creation Page] Prefill option for Budgets: Annual totals - Backend work</div>
<div class="r" style="left:502.6px;top:408.9px;width:84px;height:9px;background:#f8e59c;border-radius:2px"></div>
<div class="t" style="left:505.60px;top:410.15px;font-size:7.15px;line-height:7.15px;color:#5a4a14;font-weight:400;-webkit-text-stroke:0.12px currentColor;">Forecast &amp; Budget En...</div>
<div class="r" style="left:594.4px;top:407.29999999999995px;width:12.2px;height:12.2px;background:radial-gradient(circle at 50% 45%, #2f5fd0 0%, #1f48b8 60%, #183a9a 100%);border-radius:50%"></div>
<div class="t" style="left:597.40px;top:411.30px;font-size:5.2px;line-height:5.2px;color:#dfe6f7;font-weight:700;">ST</div>
<div class="t" style="left:611.70px;top:410.25px;font-size:7.5px;line-height:7.5px;color:#7a869a;font-weight:400;-webkit-text-stroke:0.12px currentColor;">DR-31255</div>
<svg class="r" style="left:650.2px;top:408.9px;" width="7" height="9" viewBox="0 0 7 9"><path d="M1 3 L3.5 1.2 L6 3 M1 5.6 L3.5 3.8 L6 5.6 M1 8.2 L3.5 6.4 L6 8.2" stroke="#f59a80" stroke-width="1.3" fill="none"/></svg>
<div class="r" style="left:662.5px;top:409.7px;width:14px;height:9.6px;background:#e4e6ea;border-radius:4.8px"></div>
<div class="t" style="left:667.60px;top:412.02px;font-size:6.0px;line-height:6.0px;color:#42526e;font-weight:700;">5</div>
<div class="r" style="left:177px;top:421.7px;width:506px;height:1px;background:#f2f3f6;"></div>
<svg class="r" style="left:185.3px;top:426.7px;" width="7" height="7" viewBox="0 0 7 7"><rect x="0.85" y="0.85" width="5.3" height="5.3" rx="0.8" fill="#dcf0cf" stroke="#5aa83a" stroke-width="1.4"/></svg>
<div class="t" style="left:198.6px;top:426.72px;-webkit-text-stroke:0.12px currentColor;font-size:7.2px;line-height:7.3px;letter-spacing:0.05px;color:#36445c;max-width:303px;overflow:hidden">[FBB] [Templates] Add active-inactive toggle to template list page</div>
<div class="r" style="left:502.6px;top:425.4px;width:84px;height:9px;background:#f8e59c;border-radius:2px"></div>
<div class="t" style="left:505.60px;top:426.65px;font-size:7.15px;line-height:7.15px;color:#5a4a14;font-weight:400;-webkit-text-stroke:0.12px currentColor;">Forecast &amp; Budget En...</div>
<div class="r" style="left:594.4px;top:423.79999999999995px;width:12.2px;height:12.2px;background:radial-gradient(circle at 50% 45%, #2f5fd0 0%, #1f48b8 60%, #183a9a 100%);border-radius:50%"></div>
<div class="t" style="left:597.40px;top:427.80px;font-size:5.2px;line-height:5.2px;color:#dfe6f7;font-weight:700;">ST</div>
<div class="t" style="left:611.70px;top:426.75px;font-size:7.5px;line-height:7.5px;color:#7a869a;font-weight:400;-webkit-text-stroke:0.12px currentColor;">DR-30511</div>
<svg class="r" style="left:650.2px;top:425.4px;" width="7" height="9" viewBox="0 0 7 9"><path d="M1 3 L3.5 1.2 L6 3 M1 5.6 L3.5 3.8 L6 5.6 M1 8.2 L3.5 6.4 L6 8.2" stroke="#f59a80" stroke-width="1.3" fill="none"/></svg>
<div class="r" style="left:662.5px;top:426.2px;width:14px;height:9.6px;background:#e4e6ea;border-radius:4.8px"></div>
<div class="t" style="left:667.60px;top:428.52px;font-size:6.0px;line-height:6.0px;color:#42526e;font-weight:700;">3</div>
<div class="r" style="left:177px;top:438.2px;width:506px;height:1px;background:#f2f3f6;"></div>
<svg class="r" style="left:185.3px;top:443.2px;" width="7" height="7" viewBox="0 0 7 7"><rect x="0" y="0" width="7" height="7" rx="1.2" fill="#5fb544"/><rect x="2.1" y="2.1" width="2.8" height="2.8" rx="0.6" fill="#d4f0c2"/></svg>
<div class="t" style="left:198.6px;top:443.22px;-webkit-text-stroke:0.12px currentColor;font-size:7.2px;line-height:7.3px;letter-spacing:0.05px;color:#36445c;max-width:303px;overflow:hidden">[FBB] [Forecasts/Budgets] Allow editing and saving of Forecast numbers on the Forecast edit</div>
<div class="r" style="left:502.6px;top:441.9px;width:84px;height:9px;background:#f8e59c;border-radius:2px"></div>
<div class="t" style="left:505.60px;top:443.15px;font-size:7.15px;line-height:7.15px;color:#5a4a14;font-weight:400;-webkit-text-stroke:0.12px currentColor;">Forecast &amp; Budget En...</div>
<div class="r" style="left:594.4px;top:440.29999999999995px;width:12.2px;height:12.2px;background:radial-gradient(circle at 50% 45%, #2f5fd0 0%, #1f48b8 60%, #183a9a 100%);border-radius:50%"></div>
<div class="t" style="left:597.40px;top:444.30px;font-size:5.2px;line-height:5.2px;color:#dfe6f7;font-weight:700;">ST</div>
<div class="t" style="left:611.70px;top:443.25px;font-size:7.5px;line-height:7.5px;color:#7a869a;font-weight:400;-webkit-text-stroke:0.12px currentColor;">DR-31028</div>
<svg class="r" style="left:650.2px;top:441.9px;" width="7" height="9" viewBox="0 0 7 9"><path d="M0.8 3.8 L3.5 1 L6.2 3.8 V8 L3.5 6.5 L0.8 8 Z" fill="#ef6a47"/></svg>
<div class="r" style="left:662.5px;top:442.7px;width:14px;height:9.6px;background:#e4e6ea;border-radius:4.8px"></div>
<div class="t" style="left:667.60px;top:445.02px;font-size:6.0px;line-height:6.0px;color:#42526e;font-weight:700;">5</div>
<div class="r" style="left:177px;top:454.7px;width:506px;height:1px;background:#f2f3f6;"></div>
<svg class="r" style="left:185.3px;top:459.7px;" width="7" height="7" viewBox="0 0 7 7"><rect x="0.85" y="0.85" width="5.3" height="5.3" rx="0.8" fill="#dcf0cf" stroke="#5aa83a" stroke-width="1.4"/></svg>
<div class="t" style="left:198.6px;top:459.72px;-webkit-text-stroke:0.12px currentColor;font-size:7.2px;line-height:7.3px;letter-spacing:0.05px;color:#36445c;max-width:303px;overflow:hidden">[FBB] [Forecast Edit Page] Add view for "By Day Total by Segment"</div>
<div class="r" style="left:502.6px;top:458.4px;width:84px;height:9px;background:#f8e59c;border-radius:2px"></div>
<div class="t" style="left:505.60px;top:459.65px;font-size:7.15px;line-height:7.15px;color:#5a4a14;font-weight:400;-webkit-text-stroke:0.12px currentColor;">Forecast &amp; Budget En...</div>
<div class="r" style="left:594.4px;top:456.79999999999995px;width:12.2px;height:12.2px;background:radial-gradient(circle at 50% 45%, #2f5fd0 0%, #1f48b8 60%, #183a9a 100%);border-radius:50%"></div>
<div class="t" style="left:597.40px;top:460.80px;font-size:5.2px;line-height:5.2px;color:#dfe6f7;font-weight:700;">ST</div>
<div class="t" style="left:611.70px;top:459.75px;font-size:7.5px;line-height:7.5px;color:#7a869a;font-weight:400;-webkit-text-stroke:0.12px currentColor;">DR-30566</div>
<svg class="r" style="left:650.2px;top:458.4px;" width="7" height="9" viewBox="0 0 7 9"><path d="M1 3 L3.5 1.2 L6 3 M1 5.6 L3.5 3.8 L6 5.6 M1 8.2 L3.5 6.4 L6 8.2" stroke="#f59a80" stroke-width="1.3" fill="none"/></svg>
<div class="r" style="left:662.5px;top:459.2px;width:14px;height:9.6px;background:#e4e6ea;border-radius:4.8px"></div>
<div class="r" style="left:668.7px;top:464.2px;width:1.8px;height:0.9px;background:#6b778c;"></div>
<div class="r" style="left:177px;top:471.2px;width:506px;height:1px;background:#f2f3f6;"></div>
<svg class="r" style="left:185.3px;top:476.2px;" width="7" height="7" viewBox="0 0 7 7"><rect x="0.85" y="0.85" width="5.3" height="5.3" rx="0.8" fill="#dcf0cf" stroke="#5aa83a" stroke-width="1.4"/></svg>
<div class="t" style="left:198.6px;top:476.22px;-webkit-text-stroke:0.12px currentColor;font-size:7.2px;line-height:7.3px;letter-spacing:0.05px;color:#36445c;max-width:303px;overflow:hidden">[FBB] [Forecast Creation Page] Prefill option for Budgets: Monthly + Annual totals - Frontend</div>
<div class="r" style="left:502.6px;top:474.9px;width:84px;height:9px;background:#f8e59c;border-radius:2px"></div>
<div class="t" style="left:505.60px;top:476.15px;font-size:7.15px;line-height:7.15px;color:#5a4a14;font-weight:400;-webkit-text-stroke:0.12px currentColor;">Forecast &amp; Budget En...</div>
<div class="r" style="left:594.4px;top:473.29999999999995px;width:12.2px;height:12.2px;background:radial-gradient(circle at 50% 45%, #2f5fd0 0%, #1f48b8 60%, #183a9a 100%);border-radius:50%"></div>
<div class="t" style="left:597.40px;top:477.30px;font-size:5.2px;line-height:5.2px;color:#dfe6f7;font-weight:700;">ST</div>
<div class="t" style="left:611.70px;top:476.25px;font-size:7.5px;line-height:7.5px;color:#7a869a;font-weight:400;-webkit-text-stroke:0.12px currentColor;">DR-30726</div>
<svg class="r" style="left:650.2px;top:474.9px;" width="7" height="9" viewBox="0 0 7 9"><path d="M1 3 L3.5 1.2 L6 3 M1 5.6 L3.5 3.8 L6 5.6 M1 8.2 L3.5 6.4 L6 8.2" stroke="#f59a80" stroke-width="1.3" fill="none"/></svg>
<div class="r" style="left:662.5px;top:475.7px;width:14px;height:9.6px;background:#e4e6ea;border-radius:4.8px"></div>
<div class="r" style="left:668.7px;top:480.7px;width:1.8px;height:0.9px;background:#6b778c;"></div>
<div class="r" style="left:177px;top:487.7px;width:506px;height:1px;background:#f2f3f6;"></div>
<svg class="r" style="left:185.3px;top:492.7px;" width="7" height="7" viewBox="0 0 7 7"><rect x="0.85" y="0.85" width="5.3" height="5.3" rx="0.8" fill="#dcf0cf" stroke="#5aa83a" stroke-width="1.4"/></svg>
<div class="t" style="left:198.6px;top:492.72px;-webkit-text-stroke:0.12px currentColor;font-size:7.2px;line-height:7.3px;letter-spacing:0.05px;color:#36445c;max-width:303px;overflow:hidden">[FBB] [Forecast Edit Page] Allow tile metrics to be configurable</div>
<div class="r" style="left:502.6px;top:491.4px;width:84px;height:9px;background:#f8e59c;border-radius:2px"></div>
<div class="t" style="left:505.60px;top:492.65px;font-size:7.15px;line-height:7.15px;color:#5a4a14;font-weight:400;-webkit-text-stroke:0.12px currentColor;">Forecast &amp; Budget En...</div>
<svg class="r" style="left:594.4px;top:489.8px;overflow:visible;" width="12.2" height="12.2" viewBox="0 0 12.2 12.2"><defs><clipPath id="c6005_4959"><circle cx="6.1" cy="6.1" r="6.1"/></clipPath></defs><g clip-path="url(#c6005_4959)"><rect width="12.2" height="12.2" fill="#5d5348"/><ellipse cx="6.1" cy="5.5" rx="2.8" ry="3.3" fill="#a88b6e"/><path d="M3.1 4.6 Q6.1 1 9.1 4.6 L9.1 2.6 Q6.1 0 3.2 2.6Z" fill="#3a3028"/><path d="M0 12.2 Q1.5 8.8 6.1 9 Q10.7 8.8 12.2 12.2Z" fill="#1f2630"/></g></svg>
<div class="t" style="left:611.70px;top:492.75px;font-size:7.5px;line-height:7.5px;color:#7a869a;font-weight:400;-webkit-text-stroke:0.12px currentColor;">DR-30583</div>
<svg class="r" style="left:650.2px;top:491.4px;" width="7" height="9" viewBox="0 0 7 9"><path d="M1 3 L3.5 1.2 L6 3 M1 5.6 L3.5 3.8 L6 5.6 M1 8.2 L3.5 6.4 L6 8.2" stroke="#f59a80" stroke-width="1.3" fill="none"/></svg>
<div class="r" style="left:662.5px;top:492.2px;width:14px;height:9.6px;background:#e4e6ea;border-radius:4.8px"></div>
<div class="r" style="left:668.7px;top:497.2px;width:1.8px;height:0.9px;background:#6b778c;"></div>
<div class="r" style="left:177px;top:504.2px;width:506px;height:1px;background:#f2f3f6;"></div>
<svg class="r" style="left:185.3px;top:509.2px;" width="7" height="7" viewBox="0 0 7 7"><rect x="0.85" y="0.85" width="5.3" height="5.3" rx="0.8" fill="#dcf0cf" stroke="#5aa83a" stroke-width="1.4"/></svg>
<div class="t" style="left:198.6px;top:509.22px;-webkit-text-stroke:0.12px currentColor;font-size:7.2px;line-height:7.3px;letter-spacing:0.05px;color:#36445c;max-width:303px;overflow:hidden">[FBB] [Forecast Edit Page] Ability to hide/show tile metrics on edit page</div>
<div class="r" style="left:502.6px;top:507.9px;width:84px;height:9px;background:#f8e59c;border-radius:2px"></div>
<div class="t" style="left:505.60px;top:509.15px;font-size:7.15px;line-height:7.15px;color:#5a4a14;font-weight:400;-webkit-text-stroke:0.12px currentColor;">Forecast &amp; Budget En...</div>
<div class="r" style="left:594.4px;top:506.29999999999995px;width:12.2px;height:12.2px;background:radial-gradient(circle at 50% 45%, #2f5fd0 0%, #1f48b8 60%, #183a9a 100%);border-radius:50%"></div>
<div class="t" style="left:597.40px;top:510.30px;font-size:5.2px;line-height:5.2px;color:#dfe6f7;font-weight:700;">ST</div>
<div class="t" style="left:611.70px;top:509.25px;font-size:7.5px;line-height:7.5px;color:#7a869a;font-weight:400;-webkit-text-stroke:0.12px currentColor;">DR-30584</div>
<svg class="r" style="left:650.2px;top:507.9px;" width="7" height="9" viewBox="0 0 7 9"><path d="M1 3 L3.5 1.2 L6 3 M1 5.6 L3.5 3.8 L6 5.6 M1 8.2 L3.5 6.4 L6 8.2" stroke="#f59a80" stroke-width="1.3" fill="none"/></svg>
<div class="r" style="left:662.5px;top:508.7px;width:14px;height:9.6px;background:#e4e6ea;border-radius:4.8px"></div>
<div class="r" style="left:668.7px;top:513.7px;width:1.8px;height:0.9px;background:#6b778c;"></div>
<div class="r" style="left:177px;top:519.5px;width:506px;height:1px;background:#f0f1f4;"></div>
<div class="r" style="left:594.4px;top:522.8px;width:12.2px;height:12.2px;background:radial-gradient(circle at 50% 45%, #2f5fd0 0%, #1f48b8 60%, #183a9a 100%);border-radius:50%"></div>
<div class="t" style="left:597.40px;top:526.80px;font-size:5.2px;line-height:5.2px;color:#dfe6f7;font-weight:700;">ST</div>
<div class="r" style="left:16px;top:523px;width:944px;height:17px;background:#fff;"></div>
<div class="t" style="left:706.80px;top:188.37px;font-size:6.3px;line-height:6.3px;color:#a0a8b6;font-weight:400;-webkit-text-stroke:0.12px currentColor;">DR-13058</div>
<div class="t" style="left:741.00px;top:188.37px;font-size:6.3px;line-height:6.3px;color:#a0a8b6;font-weight:400;-webkit-text-stroke:0.12px currentColor;">/</div>
<svg class="r" style="left:748.4px;top:188.3px;" width="7" height="7" viewBox="0 0 7 7"><rect x="0" y="0" width="7" height="7" rx="1.2" fill="#63ba3c"/><rect x="2" y="2" width="3" height="3" fill="#d5f0c4"/></svg>
<div class="t" style="left:757.80px;top:188.37px;font-size:6.3px;line-height:6.3px;color:#a0a8b6;font-weight:400;-webkit-text-stroke:0.12px currentColor;">DR-31360</div>
<svg class="r" style="left:826px;top:187.5px;" width="11" height="7" viewBox="0 0 11 7"><ellipse cx="5.5" cy="3.5" rx="5" ry="3" stroke="#42526e" stroke-width="1.1" fill="none"/><circle cx="5.5" cy="3.5" r="1.3" fill="#42526e"/></svg>
<div class="t" style="left:841.20px;top:188.84px;font-size:6.8px;line-height:6.8px;color:#42526e;font-weight:400;-webkit-text-stroke:0.12px currentColor;">1</div>
<svg class="r" style="left:853.5px;top:186.5px;" width="9" height="9" viewBox="0 0 9 9"><path d="M0.8 4 H2.5 V8.3 H0.8 Z M2.5 4.2 L4.5 0.8 Q5.8 1 5.4 3.2 H8 Q8.6 3.6 8.2 4.6 L7.2 8.2 H2.5" stroke="#42526e" stroke-width="1" fill="none"/></svg>
<svg class="r" style="left:870.2px;top:187px;" width="10" height="10" viewBox="0 0 10 10"><circle cx="8.2" cy="1.8" r="1.3" fill="#42526e"/><circle cx="1.8" cy="5" r="1.3" fill="#42526e"/><circle cx="8.2" cy="8.2" r="1.3" fill="#42526e"/><path d="M8.2 1.8 L1.8 5 L8.2 8.2" stroke="#42526e" stroke-width="1.1" fill="none"/></svg>
<div class="r" style="left:886.4px;top:190.8px;width:1.8px;height:1.8px;background:#42526e;border-radius:50%"></div>
<div class="r" style="left:889.8px;top:190.8px;width:1.8px;height:1.8px;background:#42526e;border-radius:50%"></div>
<div class="r" style="left:893.1999999999999px;top:190.8px;width:1.8px;height:1.8px;background:#42526e;border-radius:50%"></div>
<svg class="r" style="left:903.5px;top:188px;" width="7" height="7" viewBox="0 0 7 7"><path d="M0.5 0.5 L6.5 6.5 M6.5 0.5 L0.5 6.5" stroke="#42526e" stroke-width="1.1"/></svg>
<div class="t" style="left:706.70px;top:207.09px;font-size:11.7px;line-height:11.7px;color:#1f3050;font-weight:400;-webkit-text-stroke:0.12px currentColor;-webkit-text-stroke:0.4px currentColor;">CLONE - [FBB] [Forecasts/Budgets]</div>
<div class="t" style="left:706.70px;top:221.04px;font-size:11.7px;line-height:11.7px;color:#1f3050;font-weight:400;-webkit-text-stroke:0.12px currentColor;-webkit-text-stroke:0.4px currentColor;">Allow switching between month and</div>
<div class="t" style="left:706.70px;top:234.99px;font-size:11.7px;line-height:11.7px;color:#1f3050;font-weight:400;-webkit-text-stroke:0.12px currentColor;-webkit-text-stroke:0.4px currentColor;">day level while editing and saving of</div>
<div class="t" style="left:706.70px;top:248.94px;font-size:11.7px;line-height:11.7px;color:#1f3050;font-weight:400;-webkit-text-stroke:0.12px currentColor;-webkit-text-stroke:0.4px currentColor;">Forecast numbers on the Forecast</div>
<div class="t" style="left:706.70px;top:262.89px;font-size:11.7px;line-height:11.7px;color:#1f3050;font-weight:400;-webkit-text-stroke:0.12px currentColor;-webkit-text-stroke:0.4px currentColor;">edit page</div>
<div class="r" style="left:707px;top:283.5px;width:15px;height:13px;background:#f9fafb;border-radius:3px"></div>
<div class="r" style="left:727.5px;top:283.5px;width:15px;height:13px;background:#f9fafb;border-radius:3px"></div>
<div class="r" style="left:747.5px;top:283.5px;width:15px;height:13px;background:#f9fafb;border-radius:3px"></div>
<svg class="r" style="left:709.5px;top:285px;" width="10" height="10" viewBox="0 0 10 10"><path d="M2.6 7.6 L7.2 3" stroke="#7a869a" stroke-width="4" stroke-linecap="round" fill="none"/></svg>
<svg class="r" style="left:730px;top:285px;" width="10" height="10" viewBox="0 0 10 10"><rect x="0.6" y="0.6" width="6.5" height="6.5" rx="1" stroke="#6b778c" stroke-width="1.1" fill="none"/><path d="M2.8 9.4 H9.4 V2.8" stroke="#6b778c" stroke-width="1.1" fill="none"/><path d="M2 4 L3.5 5.3 L5.8 2.5" stroke="#6b778c" stroke-width="1" fill="none"/></svg>
<svg class="r" style="left:750px;top:285px;" width="10" height="10" viewBox="0 0 10 10"><path d="M4.2 5.8 L5.8 4.2" stroke="#6b778c" stroke-width="1.2"/><path d="M3.6 3.8 L2 5.4 Q0.6 7 2 8.2 Q3.3 9.4 4.8 8 L6.2 6.4 M3.8 3.6 L5.4 2 Q7 0.6 8.2 2 Q9.4 3.3 8 4.8 L6.4 6.2" stroke="#6b778c" stroke-width="1.2" fill="none"/></svg>
<div class="r" style="left:768.8px;top:283.7px;width:12.5px;height:12px;background:#6b778c;border-radius:1px"></div>
<div class="t" style="left:770.60px;top:286.50px;font-size:8.5px;line-height:8.5px;color:#fff;font-weight:700;">in</div>
<div class="r" style="left:706.8px;top:308.7px;width:53.1px;height:15.1px;background:#1450cc;border-radius:2px"></div>
<div class="t" style="left:712.30px;top:312.87px;font-size:7.6px;line-height:7.6px;color:#fff;font-weight:700;">Up Next</div>
<svg class="r" style="left:745.5px;top:314.5px;" width="6" height="4" viewBox="0 0 6 4"><path d="M1 1 L3 3 L5 1" stroke="#fff" stroke-width="1.3" fill="none"/></svg>
<div class="t" style="left:707.30px;top:332.14px;font-size:6.8px;line-height:6.8px;color:#34445e;font-weight:700;">Description</div>
<div class="t" style="left:707.30px;top:345.25px;font-size:7.15px;line-height:7.15px;color:#172b4d;font-weight:400;-webkit-text-stroke:0.12px currentColor;"><b>User Story:</b> As a revenue manager I need to be able to</div>
<div class="t" style="left:707.30px;top:356.75px;font-size:7.15px;line-height:7.15px;color:#172b4d;font-weight:400;-webkit-text-stroke:0.12px currentColor;">change my forecast according to my best knowledge so</div>
<div class="t" style="left:707.30px;top:368.25px;font-size:7.15px;line-height:7.15px;color:#172b4d;font-weight:400;-webkit-text-stroke:0.12px currentColor;">that I can get as close to an accurate forecast as possible.</div>
<div class="t" style="left:707.30px;top:384.86px;font-size:7.25px;line-height:7.25px;color:#172b4d;font-weight:700;">Description:</div>
<div class="t" style="left:707.30px;top:402.90px;font-size:7.2px;line-height:7.2px;color:#172b4d;font-weight:400;-webkit-text-stroke:0.12px currentColor;">Users need to be able to edit their forecast numbers (not</div>
<div class="t" style="left:707.30px;top:414.40px;font-size:7.2px;line-height:7.2px;color:#172b4d;font-weight:400;-webkit-text-stroke:0.12px currentColor;">the total), at the month level by segment and at the day</div>
<div class="t" style="left:707.30px;top:425.90px;font-size:7.2px;line-height:7.2px;color:#172b4d;font-weight:400;-webkit-text-stroke:0.12px currentColor;">level by segment. If the user changes a segment # at the</div>
<div class="t" style="left:707.30px;top:437.40px;font-size:7.2px;line-height:7.2px;color:#172b4d;font-weight:400;-webkit-text-stroke:0.12px currentColor;">month level, the total should reflect the change. If the user</div>
<div class="t" style="left:707.30px;top:448.90px;font-size:7.2px;line-height:7.2px;color:#172b4d;font-weight:400;-webkit-text-stroke:0.12px currentColor;">goes from the month level to the day level the new</div>
<div class="t" style="left:707.30px;top:460.40px;font-size:7.2px;line-height:7.2px;color:#172b4d;font-weight:400;-webkit-text-stroke:0.12px currentColor;">numbers should spread across the days for that segment.</div>
<div class="t" style="left:707.30px;top:477.86px;font-size:7.25px;line-height:7.25px;color:#172b4d;font-weight:700;">UI Mockup</div>
<div class="t" style="left:707.30px;top:489.30px;font-size:7.2px;line-height:7.2px;color:#172b4d;font-weight:400;-webkit-text-stroke:0.12px currentColor;">Month Level by segment</div>
<div class="r" style="left:706.5px;top:499.2px;width:130px;height:11.3px;background:#fff;border:1px solid #e8eaee;border-radius:2px;box-sizing:border-box"></div>
<div class="r" style="left:708.3px;top:501.5px;width:7px;height:7px;background:#ee5a6a;border-radius:1.5px"></div>
<div class="r" style="left:709.8px;top:503.5px;width:4px;height:3.5px;background:#ffd9de;border-radius:0.5px"></div>
<div class="t" style="left:717.70px;top:500.85px;font-size:7.15px;line-height:7.15px;color:#3a5fc8;font-weight:400;-webkit-text-stroke:0.12px currentColor;">Click here to view prototype FBB 2.0</div>
<div class="t" style="left:707.30px;top:512.30px;font-size:7.2px;line-height:7.2px;color:#172b4d;font-weight:400;-webkit-text-stroke:0.12px currentColor;">Stay View dropdown</div>
<div class="r" style="left:706px;top:519.5px;width:199px;height:1px;background:#eceef1;"></div>
</div>
</body></html>
